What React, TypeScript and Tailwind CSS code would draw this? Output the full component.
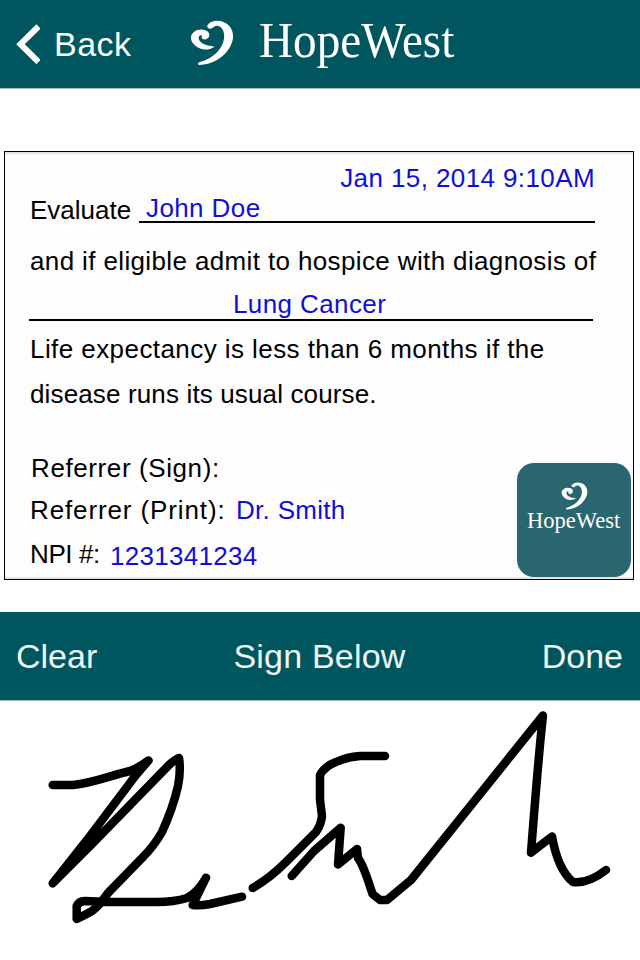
import type { ReactNode } from "react";

function Heart({ className }: { className: string }) {
  return (
    <svg className={className} viewBox="30 30 132 138" fill="white">
      <path d="M104 110C85 122 62 121 48 109C30 95 28 76 42 66C55 55 80 57 87 70C91 81 82 91 71 88C64 86 64 80 67 77C62 74 56 77 56 85C57 98 75 107 104 110Z" />
      <path d="M83 45C92 33 112 29 130 36C150 43 161 62 159 84C155 118 120 161 60 165C51 165 53 157 60 156C98 146 127 118 132 86C135 62 124 47 110 47C102 48 98 54 92 56C85 57 79 51 83 45Z" />
    </svg>
  );
}

function Printed({ className = "", children }: { className?: string; children: ReactNode }) {
  return (
    <span className={`whitespace-pre text-[26px] leading-[34px] text-black ${className}`}>
      {children}
    </span>
  );
}

function Filled({ className = "", children }: { className?: string; children: ReactNode }) {
  return (
    <span className={`whitespace-pre text-[26px] leading-[30px] text-[#0f0fd6] ${className}`}>
      {children}
    </span>
  );
}

export default function App() {
  return (
    <div className="flex h-[960px] w-[640px] flex-col overflow-hidden bg-white font-['Liberation_Sans',sans-serif]">
      <header className="flex h-[89px] shrink-0 items-start border-b border-[#a3bcc0] bg-[#00565f] text-white">
        <svg className="ml-4 mt-6 h-10 w-6" viewBox="0 0 24 40" fill="none" stroke="white" strokeWidth="6">
          <path d="M22.5 2.5L4.5 20.2L22.5 38" />
        </svg>
        <span className="ml-[14px] mt-6 w-[80px] text-[34px] leading-[40px] tracking-[0.5px]">Back</span>
        <Heart className="ml-[56px] mt-5 h-[46px] w-[44px]" />
        <span className="ml-[25px] mt-[10px] origin-left scale-x-[0.925] font-['Liberation_Serif',serif] text-[51px] leading-[60px]">
          HopeWest
        </span>
      </header>

      <main className="relative ml-1 mt-[62px] flex h-[429px] w-[630px] shrink-0 flex-col border border-black bg-[#fdfdfd] pl-[25px] shadow-[inset_0_2px_1px_#e4e4e4,inset_0_-2px_1px_#e4e4e4]">
        <div className="mt-[11px] flex h-[30px] w-[565px] justify-end">
          <Filled className="tracking-[0.4px]">Jan 15, 2014 9:10AM</Filled>
        </div>
        <div className="flex h-[30px]">
          <Printed className="w-[109px]">Evaluate</Printed>
          <div className="h-[30px] w-[456px] border-b-2 border-black pl-[7px]">
            <Filled className="tracking-[0.4px]">John Doe</Filled>
          </div>
        </div>
        <div className="mt-[21px] flex h-[30px]">
          <Printed className="tracking-[0.37px]">and if eligible admit to hospice with diagnosis of</Printed>
        </div>
        <div className="-ml-px mt-[15px] flex h-8 w-[564px] border-b-2 border-black pl-[204px]">
          <Filled className="tracking-[0.4px]">Lung Cancer</Filled>
        </div>
        <div className="mt-[11px] flex h-[30px]">
          <Printed className="tracking-[0.43px]">Life expectancy is less than 6 months if the</Printed>
        </div>
        <div className="mt-[15px] flex h-[30px]">
          <Printed className="tracking-[0.14px]">disease runs its usual course.</Printed>
        </div>
        <div className="ml-px mt-[44px] flex h-[30px]">
          <Printed className="tracking-[0.6px]">Referrer (Sign):</Printed>
        </div>
        <div className="mt-[12px] flex h-[30px]">
          <Printed className="w-[206px] tracking-[0.88px]">Referrer (Print):</Printed>
          <Filled className="mt-[2px] tracking-[0.3px]">Dr. Smith</Filled>
        </div>
        <div className="mt-[14px] flex h-[30px]">
          <Printed className="w-[80px] tracking-[-0.4px]">NPI #:</Printed>
          <Filled className="mt-[4px] tracking-[0.3px]">1231341234</Filled>
        </div>
        <div className="absolute left-[512px] top-[311px] flex h-[114px] w-[114px] flex-col items-center rounded-[17px] bg-[#2a6670] text-white">
          <Heart className="mt-[19px] h-[28px] w-[27px]" />
          <span className="-mt-[3px] scale-x-[0.98] font-['Liberation_Serif',serif] text-[23px] leading-[28px]">HopeWest</span>
        </div>
      </main>

      <nav className="mt-8 flex h-[89px] shrink-0 items-start justify-between border-b border-[#a3bcc0] bg-[#00565f] pl-4 pr-[17px] pt-6 text-[34px] leading-[40px] text-[#eef6f6]">
        <span>Clear</span>
        <span className="tracking-[0.2px]">Sign Below</span>
        <span>Done</span>
      </nav>

      <svg className="h-[259px] w-[640px] shrink-0" viewBox="0 701 640 259" fill="none" stroke="black" strokeWidth="8.5" strokeLinecap="round" strokeLinejoin="round">
        <path d="M52.7 785H73C93 783 112 775 130 771Q140 767 148.5 760.5L136 775L87 840L52.7 883.3L92 844L168 766Q174 760 179 758Q181 771 178 786Q173 808 162 832Q154 846 143 857L108 893Q99 906 92 911Q85 915 76.7 919V906Q79 901 85 901L108 902H157Q174 902 187 898Q198 892 206 877.7L192.7 905Q200 906 210 904L242 896.7" />
        <path d="M385 756H360Q347 757 336 762Q325 766 320 775V800L322 816Q321 825 316 832L286 862Q270 878 252.7 888" />
        <path d="M291.7 876L314 851L340.7 827.7L338 864.5L357 849L358 858Q363 864 372.5 894L380 900H387L411 880L543 715.5Q539 750 531 852.7L552 836.5Q558 870 573 882Q588 884 606 870" />
      </svg>
    </div>
  );
}
